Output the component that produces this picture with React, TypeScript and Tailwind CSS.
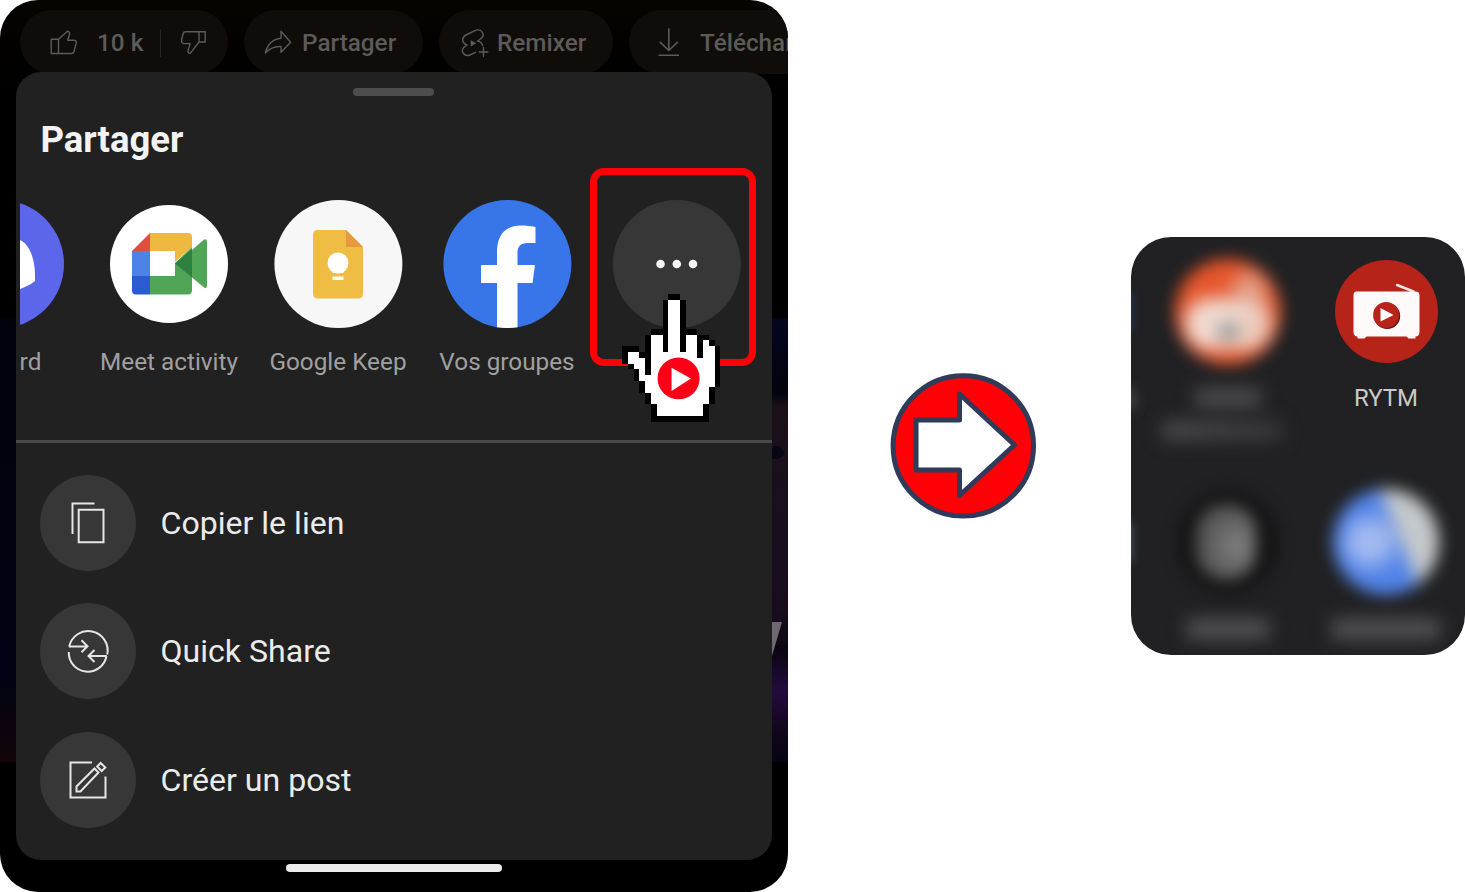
import React from "react";

const HAND = [
  "........BB.......",
  ".......BWWB......",
  ".......BWWB......",
  ".......BWWB......",
  ".......BWWB......",
  ".......BWWB......",
  ".....BBBWWBBB....",
  "....BWWBWWBWWBB..",
  "....BWWBWWBWWBWB.",
  "BBB.BWWBWWBWWBWWB",
  "BWWBBWWWWWWWWBWWB",
  "BWWWBWWWWWWWWWWWB",
  ".BWWBWWWWWWWWWWWB",
  "..BWBWWWWWWWWWWWB",
  "..BWWWWWWWWWWWWWB",
  "...BWWWWWWWWWWWWB",
  "...BWWWWWWWWWWWB.",
  "....BWWWWWWWWWWB.",
  "....BWWWWWWWWWWB.",
  ".....BWWWWWWWWB..",
  ".....BWWWWWWWWB..",
  ".....BBBBBBBBBB..",
];

function HandCursor() {
  return (
    <svg className="absolute left-[621.5px] top-[294px] h-[127.5px] w-[98.7px]" viewBox="0 0 17 22" preserveAspectRatio="none">
      <g shapeRendering="crispEdges">
        {HAND.flatMap((row, y) =>
          row.split("").map((c, x) =>
            c === "." ? null : (
              <rect key={`${x}-${y}`} x={x} y={y} width={1} height={1} fill={c === "B" ? "#000" : "#fff"} />
            ),
          ),
        )}
      </g>
      <circle cx="9.75" cy="14.56" r="3.62" fill="#fb0016" />
      <path d="M8.54 12.72V16.72L11.86 14.6Z" fill="#fff" />
    </svg>
  );
}

function Chips() {
  const pill = "flex h-[64px] shrink-0 items-center rounded-full bg-[#100c09] pt-[1px]";
  const text = "whitespace-nowrap text-[24.3px] leading-none font-medium text-[#5d5b59]";
  return (
    <div className="flex h-[72px] gap-4 pl-5 pt-[10px]">
      <div className={`${pill} w-[208px] pl-[30px]`}>
        <svg className="h-[26px] w-[28px]" viewBox="50 30 28 26" fill="none" stroke="#5d5b59" strokeWidth="1.4" strokeLinejoin="round">
          <path d="M51.2 39.3H58.5V53.5H51.2ZM58.5 39.3 67.5 31.3C69.6 31.6 70 33 69.5 34.7L67.6 40.2H74.5C76 40.4 76.5 41.6 76.2 43L74 51.5C73.6 53 73 53.5 71.5 53.5H58.5" />
        </svg>
        <span className={`${text} ml-[19px] w-[63px] pt-[2px]`}>10 k</span>
        <div className="h-[28px] w-px bg-[#2a2623]" />
        <svg className="ml-[19px] h-[26px] w-[28px]" viewBox="180 30 28 26" fill="none" stroke="#5d5b59" strokeWidth="1.4" strokeLinejoin="round">
          <path d="M199 31.7H205.2V42H199ZM199 31.7H185.5C184 31.7 183.5 32.3 183.2 33.5L181.6 39.5C181.2 42 182 43.6 184 43.6H190.2L188 50.5C187.7 52.4 188.6 53.3 190.3 53.4L199 42" />
        </svg>
      </div>
      <div className={`${pill} w-[179px] pl-[20px]`}>
        <svg className="h-[26px] w-[28px]" viewBox="264 30 28 26" fill="none" stroke="#5d5b59" strokeWidth="1.4" strokeLinejoin="round">
          <path d="M281 31.2 290.6 42.3 281 52.3V46.5C274 46 269.5 48.5 265.3 53C267.5 44.5 272 39 281 38.2Z" />
        </svg>
        <span className={`${text} ml-[10px] pt-[2px]`}>Partager</span>
      </div>
      <div className={`${pill} w-[174px] pl-[22px]`}>
        <svg className="h-[30px] w-[29px]" viewBox="461 27 29 30" fill="none" stroke="#5d5b59" strokeWidth="1.4" strokeLinecap="round">
          <path d="M475.5 51.3 470 54C464.5 56 460.4 50.5 463.5 46.8L466.8 44C461.8 42 461.4 36.2 466 34L476 29.2C482 27.5 485.3 34 481.3 37.3L477.8 40C480.3 40.5 482 42.2 482.6 44.5M483.5 46.5V55.3M479.2 51H487.8" />
          <path d="M470.7 39.2V45.4L476.3 42.3Z" fill="#5d5b59" stroke="none" />
        </svg>
        <span className={`${text} ml-[7px] pt-[2px]`}>Remixer</span>
      </div>
      <div className={`${pill} w-[220px] pl-[29px]`}>
        <svg className="h-[30px] w-[22px] shrink-0" viewBox="658 27 22 30" fill="none" stroke="#5d5b59" strokeWidth="1.6">
          <path d="M668.8 27.2V49M659.8 40.8 668.8 49.5 677.8 40.8M658.5 54.3H679" />
        </svg>
        <span className={`${text} ml-[20px] pt-[2px]`}>Télécharger</span>
      </div>
    </div>
  );
}

function Target({ label, children }: { label?: string; children: React.ReactNode }) {
  return (
    <div className="flex w-[169px] shrink-0 flex-col items-center">
      <svg className="h-[130px] w-[130px]" viewBox="-65 -65 130 130">
        {children}
      </svg>
      <span className="mt-[18px] whitespace-nowrap text-[24.3px] leading-[30px] text-[#a0a0a0]">{label}</span>
    </div>
  );
}

function Targets() {
  return (
    <div className="ml-1 mt-[39px] h-[190px] overflow-hidden">
      <div className="ml-[-104.5px] flex">
        <Target label="Discord">
          <circle r="64" fill="#5b66ea" />
          <path d="M-35 12C-33-8-29-20-22-23C-8-28 8-28 22-23C30-18 35-4 35 11V17C30 21 25 23 20 25H-20C-25 23-30 21-35 17Z" fill="#fff" />
        </Target>
        <Target label="Meet activity">
          <circle r="59" fill="#fff" />
          <path d="M-19-31H19Q23-31 23-27V-17L6-2V-13H-19Z" fill="#efb941" />
          <path d="M-19-31V-13H-37Z" fill="#df4f3e" />
          <path d="M-37-13H-19V12H-37Z" fill="#4d83e8" />
          <path d="M-37 12H-19V30.5H-33Q-37 30.5-37 26.5Z" fill="#2a5bd0" />
          <path d="M-19 12H6V-1L23-17V26Q23 30.5 19 30.5H-19Z" fill="#50a557" />
          <path d="M23-14 34.5-24Q38-26 38-22V21Q38 26 34.5 23L23 13.5Z" fill="#50a557" />
          <path d="M6-.5 23-15V13.5Z" fill="#2f8142" />
        </Target>
        <Target label="Google Keep">
          <circle cx=".4" r="64" fill="#f7f7f8" />
          <path d="M-21-34H8L25-17V29.5Q25 34.5 20 34.5H-20Q-25 34.5-25 29.5V-29Q-25-34-20-34Z" fill="#efbd43" />
          <path d="M8-34 25-17H8Z" fill="#e9993d" />
          <circle cx="0" cy="-1" r="10.5" fill="#fff" />
          <path d="M-5.5 5H5.5V9H-5.5ZM-5.5 12.5H5.5V16H-5.5Z" fill="#fff" />
        </Target>
        <Target label="Vos groupes">
          <circle cx=".4" r="64" fill="#3875e8" />
          <path d="M-10 63.2V19H-26V1H-10V-12C-10-30-1-38.5 14-38.5C19-38.5 24-38 28.5-37V-21H21C13-21 10.5-17 10.5-11V1H28L25.5 19H10.5V63.2Q0 64.8-10 63.2Z" fill="#fff" />
        </Target>
        <Target>
          <circle cx=".8" r="64" fill="#373737" />
          <circle cx="-15.5" r="4.3" fill="#f4f4f4" />
          <circle cx=".8" r="4.3" fill="#f4f4f4" />
          <circle cx="17" r="4.3" fill="#f4f4f4" />
        </Target>
      </div>
    </div>
  );
}

function Action({ label, children }: { label: string; children: React.ReactNode }) {
  return (
    <div className="flex h-24 items-center">
      <div className="flex h-24 w-24 items-center justify-center rounded-full bg-[#373737]">
        <svg className="h-12 w-12" viewBox="-24 -24 48 48" fill="none" stroke="#e6e6e6" strokeWidth="2">
          {children}
        </svg>
      </div>
      <span className="ml-[24.5px] text-[32.1px] leading-none text-[#ebebeb]">{label}</span>
    </div>
  );
}

function Phone() {
  return (
    <div className="relative flex h-[892px] w-[788px] shrink-0 flex-col overflow-hidden rounded-[38px] bg-linear-to-b from-[#080500] via-black via-15% to-black">
      <Chips />
      <div className="flex h-[788px]">
        <div className="mt-[246px] h-[444px] w-4 bg-linear-to-b from-[#02020c] via-[#020214] via-80% to-[#130408]" />
        <div className="z-10 flex w-[755.5px] shrink-0 flex-col rounded-[25px] bg-[#212121]">
          <div className="mt-4 h-2 w-[81px] self-center rounded-full bg-[#4d4d4d]" />
          <h1 className="ml-[24.5px] mt-[24px] text-[36.5px] leading-[40px] font-bold text-[#f3f3f3]">Partager</h1>
          <Targets />
          <div className="mt-[51px] h-[2.5px] shrink-0 bg-[#4a4a4a]" />
          <div className="ml-6 mt-[32.3px] flex flex-col gap-[32.4px]">
            <Action label="Copier le lien">
              <path d="M-15.5 11V-19.5H6.5M-9.3-13.2H15.5V19.3H-9.3Z" />
            </Action>
            <Action label="Quick Share">
              <path d="M-19.2-4.5H-1M-6.5-10.8-.5-4.7-6.5 1.2M-18.8-4.5A19 19 0 0 1 19.2 3.500M18.8 5H0M6.5-1 .5 5 6.5 11M18.5 5A19 19 0 0 1-19.200 1" />
            </Action>
            <Action label="Créer un post">
              <path d="M4-17.5H-17.5V17.5H17.5V-3.5M-11.5 11.5V6.5L6.5-11.5 10.5-7.5-7.5 11.5ZM9.2-13.5 12.7-17 17.3-12.5 13.7-9Z" />
            </Action>
          </div>
        </div>
        <svg className="mt-[246px] h-[444px] w-[16.5px]" viewBox="0 0 16.5 444" preserveAspectRatio="none">
          <defs>
            <linearGradient id="scene" x1="0" y1="0" x2="0" y2="1">
              <stop offset="0" stopColor="#05051f" />
              <stop offset=".17" stopColor="#03030d" />
              <stop offset=".2" stopColor="#1c1118" />
              <stop offset=".4" stopColor="#190f1d" />
              <stop offset=".66" stopColor="#190d1d" />
              <stop offset=".75" stopColor="#0b0612" />
              <stop offset=".84" stopColor="#230b3e" />
              <stop offset=".93" stopColor="#12061c" />
              <stop offset="1" stopColor="#050414" />
            </linearGradient>
          </defs>
          <path d="M0 0H16.5V444H0Z" fill="url(#scene)" />
          <path d="M0 130C5 126 10 128 13 136C8 141 4 142 0 140Z" fill="#080514" />
          <path d="M0 304H10L0 338Z" fill="#6c6a6c" />
        </svg>
      </div>
      <div className="mt-[4px] h-2 w-[216px] self-center rounded-full bg-[#ebebeb]" />
      <div className="absolute left-[590px] top-[168.4px] z-20 h-[197.4px] w-[166px] rounded-[14px] border-[7.5px] border-[#ff0006]" />
      <div className="absolute inset-0 z-30">
        <HandCursor />
      </div>
    </div>
  );
}

function AppCard() {
  return (
    <div className="relative grid h-[418px] w-[334px] shrink-0 grid-cols-[158px_158px] grid-rows-[231px_187px] overflow-hidden rounded-[40px] bg-[#212123] pl-[18px]">
      <div className="flex flex-col items-center pt-[22px]">
        <div className="blur-[8px]">
          <div className="relative h-[106px] w-[106px] overflow-hidden rounded-full bg-[#e6552b]">
            <div className="absolute left-[10px] top-[40px] h-[50px] w-[86px] rounded-full bg-[#f5e2da] blur-[5px]" />
            <div className="absolute left-[58px] top-[14px] h-[60px] w-[32px] rounded-full bg-[#e2a58f] blur-[6px]" />
            <div className="absolute left-[22px] top-[44px] h-[24px] w-[64px] rounded-full bg-[#efd8ce] blur-[4px]" />
            <div className="absolute left-[40px] top-[64px] h-[18px] w-[26px] rounded-full bg-[#9ea09d] blur-[2px]" />
          </div>
        </div>
        <div className="mt-[23px] h-[20px] w-[66px] bg-[#4c4c4e] blur-[9px]" />
        <div className="mt-[13px] h-[19px] w-[120px] -translate-x-[6px] bg-linear-to-r from-[#4c4c4e] to-[#38383a] blur-[9px]" />
      </div>
      <div className="flex flex-col items-center pt-[22.5px]">
        <svg className="h-[103px] w-[103px]" viewBox="-51.5 -51.5 103 103">
          <circle r="51.5" fill="#b62319" />
          <path d="M10.5-26.5 27-20" stroke="#f5e5e0" strokeWidth="2.5" strokeLinecap="round" />
          <path d="M-30-20H29Q33-20 33-16V20Q33 25 29 25V27H22L20 25H-20L-22 27H-29V25Q-33 25-33 20V-16Q-33-20-30-20Z" fill="#fffafa" />
          <circle cx=".7" cy="4.5" r="13" fill="#651511" />
          <circle cx="-.4" cy="3.5" r="13" fill="#b8231a" />
          <path d="M-6-3.5V10L7 3.5Z" fill="#fff" />
        </svg>
        <span className="mt-[21.5px] text-[24px] leading-[28px] text-[#c9c9cb]">RYTM</span>
      </div>
      <div className="flex flex-col items-center pt-[22px]">
        <div className="flex h-[104px] w-[104px] items-center justify-center rounded-full bg-[#151516] blur-[7px]">
          <div className="h-[76px] w-[60px] -translate-x-[2px] rounded-[28px] bg-[radial-gradient(circle_at_70%_55%,#828282,#4c4c4c_75%)] blur-[3px]" />
        </div>
        <div className="mt-[25px] h-[20px] w-[82px] bg-[#545456] blur-[9px]" />
      </div>
      <div className="flex flex-col items-center pt-[21px]">
        <div className="blur-[8px]">
          <div className="relative h-[106px] w-[106px] overflow-hidden rounded-full bg-[linear-gradient(68deg,#5283e8_56%,#c5c9cb_64%)]">
            <div className="absolute left-[12px] top-[28px] h-[50px] w-[50px] rounded-full bg-[#a2baf0] blur-[6px]" />
          </div>
        </div>
        <div className="mt-[24px] h-[20px] w-[108px] bg-[#545456] blur-[9px]" />
      </div>
      <div className="absolute -left-[10px] top-[55px] h-[40px] w-[10px] bg-[#203a70] blur-[5px]" />
      <div className="absolute -left-[6px] top-[152px] h-[20px] w-[10px] bg-[#48484a] blur-[6px]" />
      <div className="absolute -left-[10px] top-[285px] h-[40px] w-[10px] bg-[#4a656b] blur-[5px]" />
    </div>
  );
}

export default function App() {
  return (
    <div className="flex h-[892px] w-[1465px] items-center overflow-hidden bg-white font-['Roboto',sans-serif]">
      <Phone />
      <svg className="ml-[102px] h-[146px] w-[146px] shrink-0" viewBox="890 373 146 146">
        <circle cx="963.3" cy="445.9" r="70.2" fill="#ff0006" stroke="#2f3b59" strokeWidth="5" />
        <path d="M916 420H959.5V394L1014.5 445 959.5 495.5V470H916Z" fill="#fff" stroke="#2f3b59" strokeWidth="5" strokeLinejoin="round" />
      </svg>
      <div className="ml-[95px] flex">
        <AppCard />
      </div>
    </div>
  );
}
